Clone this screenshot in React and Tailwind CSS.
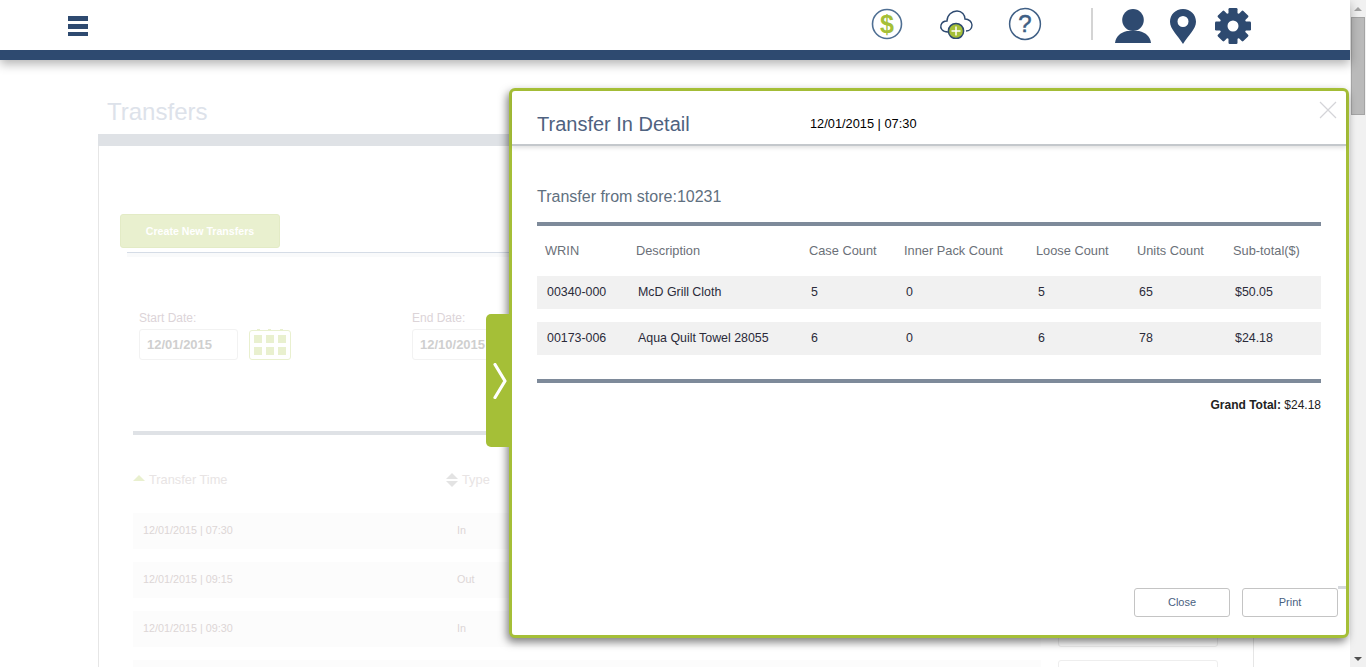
import React from "react";

const details = [
  { wrin: "00340-000", desc: "McD Grill Cloth", caseCount: "5", inner: "0", loose: "5", units: "65", sub: "$50.05" },
  { wrin: "00173-006", desc: "Aqua Quilt Towel 28055", caseCount: "6", inner: "0", loose: "6", units: "78", sub: "$24.18" },
];

const transfers = [
  { time: "12/01/2015 | 07:30", type: "In" },
  { time: "12/01/2015 | 09:15", type: "Out" },
  { time: "12/01/2015 | 09:30", type: "In" },
  { time: "", type: "" },
];

function DollarIcon() {
  return (
    <svg width="32" height="32" viewBox="0 0 32 32" className="mt-[8px]">
      <circle cx="16" cy="16" r="14.5" fill="#fff" stroke="#4f6f93" strokeWidth="1.6" />
      <text x="16" y="24.5" textAnchor="middle" fontSize="25" fontWeight="700" fontFamily="'Liberation Sans', sans-serif" fill="#a5bf37">$</text>
    </svg>
  );
}

function CloudIcon() {
  return (
    <svg width="34" height="30" viewBox="0 0 34 30" className="mt-[9px]">
      <path d="M9 23 C3 23 1 19 2 16 C3 13 6 12 8 12 C8 6 13 2 18 2 C23 2 26 6 26 10 C30 10 33 13 33 16 C33 20 30 22 27 22" fill="none" stroke="#2e4a70" strokeWidth="1.4" />
      <circle cx="17" cy="22" r="7.6" fill="#a5bf37" stroke="#2e4a70" strokeWidth="1.5" />
      <path d="M17 17.5 V26.5 M12.5 22 H21.5" stroke="#fff" strokeWidth="1.5" />
    </svg>
  );
}

function HelpIcon() {
  return (
    <svg width="34" height="34" viewBox="0 0 34 34" className="mt-[7px]">
      <circle cx="17" cy="17" r="15.4" fill="#fff" stroke="#3f5f85" strokeWidth="1.5" />
      <text x="17" y="25" textAnchor="middle" fontSize="24" fontWeight="400" stroke="#3f5f85" strokeWidth="0.5" fontFamily="'Liberation Sans', sans-serif" fill="#3f5f85">?</text>
    </svg>
  );
}

function UserIcon() {
  return (
    <svg width="36" height="34" viewBox="0 0 36 34" className="mt-[9px]">
      <ellipse cx="18" cy="11" rx="10.8" ry="11" fill="#2e4a70" />
      <path d="M0 34 C1 27 5 24 12 22 L24 22 C31 24 35 27 36 34 Z" fill="#2e4a70" />
    </svg>
  );
}

function PinIcon() {
  return (
    <svg width="26" height="35" viewBox="0 0 26 35" className="mt-[9px]">
      <path fillRule="evenodd" d="M13 0 C20.5 0 26 5.5 26 12.8 C26 20 18 27 13 35 C8 27 0 20 0 12.8 C0 5.5 5.5 0 13 0 Z M13 7 A5.5 5.5 0 1 0 13 18 A5.5 5.5 0 1 0 13 7 Z" fill="#2e4a70" />
    </svg>
  );
}

function GearIcon() {
  return (
    <svg width="36" height="36" viewBox="0 0 36 36" className="mt-[8px]">
      {[0, 45, 90, 135, 180, 225, 270, 315].map((deg) => (
        <rect key={deg} x="13.5" y="0" width="9" height="8" rx="1.2" fill="#2e4a70" transform={`rotate(${deg} 18 18)`} />
      ))}
      <path fillRule="evenodd" d="M18 4.5 A13.5 13.5 0 1 1 18 31.5 A13.5 13.5 0 1 1 18 4.5 Z M18 12.5 A5.5 5.5 0 1 0 18 23.5 A5.5 5.5 0 1 0 18 12.5 Z" fill="#2e4a70" />
    </svg>
  );
}

function CalendarIcon() {
  return (
    <div className="relative ml-[11px] mt-[1px] w-[42px] h-[30px] border border-[#e9f0cf] rounded-[3px] grid grid-cols-3 gap-x-[4px] gap-y-[4px] px-[4px] py-[4px]">
      <div className="absolute left-[7px] top-[-2px] w-[3px] h-[2px] bg-[#e9f0cf]" />
      <div className="absolute left-[18px] top-[-2px] w-[3px] h-[2px] bg-[#e9f0cf]" />
      <div className="absolute left-[30px] top-[-2px] w-[3px] h-[2px] bg-[#e9f0cf]" />
      {[0, 1, 2, 3, 4, 5].map((i) => (
        <div key={i} className="bg-[#e9f0cf]" />
      ))}
    </div>
  );
}

function SortBoth() {
  return (
    <div className="flex flex-col gap-[2px] mr-[4px]">
      <div className="w-0 h-0 border-x-[6px] border-x-transparent border-b-[6px] border-b-[#e3e3e3]" />
      <div className="w-0 h-0 border-x-[6px] border-x-transparent border-t-[6px] border-t-[#e3e3e3]" />
    </div>
  );
}

function DetailModal() {
  return (
    <div className="absolute left-[509px] top-[88px] w-[840px] h-[550px] bg-white border-[3px] border-[#a5bf37] rounded-[6px] shadow-[-2px_4px_9px_rgba(0,0,0,0.5)] flex flex-col">
      {/* green tab */}
      <div className="absolute left-[-26px] top-[223px] w-[25px] h-[133px] bg-[#a5bf37] rounded-l-[5px] flex items-center justify-center pl-[3px]">
        <svg width="14" height="36" viewBox="0 0 14 36">
          <path d="M2 1.5 L12 18 L2 34.5" fill="none" stroke="#fff" strokeWidth="3.2" strokeLinecap="round" strokeLinejoin="round" />
        </svg>
      </div>
      <svg width="18" height="18" viewBox="0 0 18 18" className="absolute right-[9px] top-[10px]">
        <path d="M1 1 L17 17 M17 1 L1 17" stroke="#d4d4d8" strokeWidth="1.2" />
      </svg>

      <div className="h-[55px] shrink-0 flex items-start border-b-2 border-b-[#c4c8cc] shadow-[0_2px_4px_rgba(0,0,0,0.12)] pl-[25px]">
        <h2 className="mt-[21px] w-[273px] text-[20px] leading-[24px] text-[#4f6280]">Transfer In Detail</h2>
        <span className="mt-[25px] text-[12.8px] leading-[15px] text-black">12/01/2015 | 07:30</span>
      </div>

      <div className="flex-1 flex flex-col pl-[25px] pr-[25px]">
        <div className="mt-[41px] text-[16px] leading-[20px] text-[#5f7080]">Transfer from store:10231</div>
        <div className="mt-[15px] h-[4px] bg-[#7e8a9a]" />
        <div className="mt-[17px] h-[15px] grid grid-cols-[91px_173px_95px_132px_101px_96px_1fr] pl-[8px] text-[12.8px] leading-[15px] text-[#6b7078]">
          <div>WRIN</div>
          <div>Description</div>
          <div>Case Count</div>
          <div>Inner Pack Count</div>
          <div>Loose Count</div>
          <div>Units Count</div>
          <div>Sub-total($)</div>
        </div>
        <div className="mt-[18px] flex flex-col gap-[13px]">
          {details.map((row) => (
            <div key={row.wrin} className="h-[33px] bg-[#f1f1f1] grid grid-cols-[91px_173px_95px_132px_101px_96px_1fr] items-center pl-[10px] pb-[1px] text-[12.4px] text-[#2b2b3a]">
              <div>{row.wrin}</div>
              <div>{row.desc}</div>
              <div>{row.caseCount}</div>
              <div>{row.inner}</div>
              <div>{row.loose}</div>
              <div>{row.units}</div>
              <div>{row.sub}</div>
            </div>
          ))}
        </div>
        <div className="mt-[24px] h-[4px] bg-[#7e8a9a]" />
        <div className="mt-[15px] text-right text-[12px] leading-[15px] text-[#222]">
          <span className="font-bold">Grand Total:</span> $24.18
        </div>
      </div>

      <div className="absolute right-0 top-[495px] w-[8px] h-[3px] bg-[#d5d8dc]" />
      <div className="shrink-0 flex justify-end gap-[12px] pr-[8px] pb-[18px]">
        <button type="button" className="w-[96px] h-[29px] bg-white border border-[#c4c4c4] rounded-[3px] text-[11px] text-[#4a5f7f]">Close</button>
        <button type="button" className="w-[96px] h-[29px] bg-white border border-[#c4c4c4] rounded-[3px] text-[11px] text-[#4a5f7f]">Print</button>
      </div>
    </div>
  );
}

export default function App() {
  return (
    <div className="relative flex h-[667px] overflow-hidden bg-white font-['Liberation_Sans',Arial,sans-serif]">
      <div className="w-[1350px] shrink-0 flex flex-col">
        {/* top bar */}
        <header className="relative shrink-0 z-10 shadow-[0_4px_10px_rgba(0,0,0,0.3)] bg-white">
          <div className="h-[50px] flex items-start">
            <div className="ml-[68px] mt-[16px] w-[20px] flex flex-col gap-[3px]">
              <div className="h-[5px] bg-[#2e4a70]" />
              <div className="h-[5px] bg-[#2e4a70]" />
              <div className="h-[4px] bg-[#2e4a70]" />
            </div>
            <div className="ml-[783px]"><DollarIcon /></div>
            <div className="ml-[36px]"><CloudIcon /></div>
            <div className="ml-[35px]"><HelpIcon /></div>
            <div className="ml-[49px] mt-[8px] w-[2px] h-[32px] bg-[#d4d4d4]" />
            <div className="ml-[22px]"><UserIcon /></div>
            <div className="ml-[19px]"><PinIcon /></div>
            <div className="ml-[19px]"><GearIcon /></div>
          </div>
          <div className="h-[10px] bg-[#2e4a70]" />
        </header>

        {/* faded page behind the modal */}
        <main className="ml-[98px] w-[1156px]">
          <h1 className="mt-[38px] ml-[9px] text-[24px] leading-[28px] text-[#dde2ea]">Transfers</h1>
          <div className="mt-[8px] h-[12px] bg-[#dfe2e6]" />
          <div className="border-x border-x-[#e6e6e6] pb-[20px]">
            <button type="button" className="mt-[68px] ml-[21px] w-[160px] h-[34px] pt-[1px] bg-[#e9f0cf] border border-[#e3ebc6] rounded-[3px] text-[10.6px] font-bold text-white">Create New Transfers</button>
            <div className="mt-[4px] ml-[28px] h-[1px] bg-[#d5dce6]" />
            <div className="ml-[28px] h-[4px] bg-[#f9fafb]" />

            <div className="mt-[54px] ml-[40px] flex">
              <div className="w-[273px]">
                <div className="text-[12px] leading-[14px] text-[#dcd4d8]">Start Date:</div>
                <div className="mt-[4px] flex">
                  <div className="w-[99px] h-[31px] border border-[#f2f2f2] rounded-[3px] pl-[7px] text-[13px] leading-[29px] font-bold text-[#cfcfcf]">12/01/2015</div>
                  <CalendarIcon />
                </div>
              </div>
              <div>
                <div className="text-[12px] leading-[14px] text-[#dcd4d8]">End Date:</div>
                <div className="mt-[4px] w-[99px] h-[31px] border border-[#f2f2f2] rounded-[3px] pl-[7px] text-[13px] leading-[29px] font-bold text-[#cfcfcf]">12/10/2015</div>
              </div>
            </div>

            <div className="mt-[71px] ml-[34px] mr-[213px] h-[4px] bg-[#dfe2e6]" />

            <div className="mt-[37px] ml-[34px] flex items-center h-[15px] text-[12.8px] text-[#e8e4e4]">
              <div className="w-0 h-0 border-x-[6px] border-x-transparent border-b-[6px] border-b-[#e9f0cf] mr-[4px] mb-[4px]" />
              <span className="w-[297px]">Transfer Time</span>
              <SortBoth />
              <span>Type</span>
            </div>

            <div className="mt-[26px] ml-[34px] flex flex-col gap-[13px]">
              {transfers.map((row, i) => (
                <div key={i} className="flex">
                  <div className="w-[908px] h-[36px] bg-[#fcfcfc] flex items-center pl-[10px] pb-[2px] text-[10.8px] text-[#ddd6d6]">
                    <span className="w-[314px]">{row.time}</span>
                    <span>{row.type}</span>
                  </div>
                  <div className="ml-[17px] w-[160px] h-[36px] bg-white border border-[#eeeeee] rounded-[3px]" />
                </div>
              ))}
            </div>
          </div>
        </main>
      </div>

      {/* page scrollbar */}
      <div className="w-[16px] shrink-0 bg-[#f1f1f1] flex flex-col items-center">
        <div className="h-[17px] flex items-center justify-center">
          <div className="w-0 h-0 border-x-[4px] border-x-transparent border-b-[4px] border-b-[#a3a3a3]" />
        </div>
        <div className="w-[14px] h-[98px] bg-[#bababa] border border-[#a4a4a4]" />
        <div className="flex-1" />
        <div className="h-[17px] flex items-center justify-center">
          <div className="w-0 h-0 border-x-[4px] border-x-transparent border-t-[4px] border-t-[#505050]" />
        </div>
      </div>

      <DetailModal />
    </div>
  );
}
